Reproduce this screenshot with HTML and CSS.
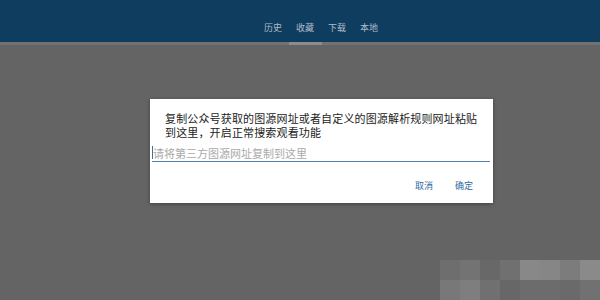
FILE: index.html
```html
<!DOCTYPE html>
<html lang="zh-CN">
<head>
  <meta charset="UTF-8">
  <meta name="viewport" content="width=device-width, initial-scale=1.0">
  <link rel="stylesheet" href="styles.css">
  <title>图源</title>
</head>
<body>
  <div class="header">
    <div class="tabs">
      <div class="tab">历史</div>
      <div class="tab">收藏</div>
      <div class="tab">下载</div>
      <div class="tab">本地</div>
    </div>
  </div>
  <div class="strip">
    <div class="indicator"></div>
  </div>

  <div class="main">
    <div class="dialog">
      <div class="msg">复制公众号获取的图源网址或者自定义的图源解析规则网址粘贴到这里，开启正常搜索观看功能</div>
      <div class="field">
        <span class="caret"></span>
        <span class="hint">请将第三方图源网址复制到这里</span>
      </div>
      <div class="actions">
        <span class="btn">取消</span>
        <span class="btn">确定</span>
      </div>
    </div>
  </div>

  <div class="mosaic">
    <div style="background:#6e6e6e"></div>
    <div style="background:#737373"></div>
    <div style="background:#686868"></div>
    <div style="background:#707070"></div>
    <div style="background:#888888"></div>
    <div style="background:#868686"></div>
    <div style="background:#7c7c7c"></div>
    <div style="background:#8a8a8a"></div>
    <div style="background:#787878"></div>
    <div style="background:#7e7e7e"></div>
    <div style="background:#707070"></div>
    <div style="background:#676767"></div>
    <div style="background:#6c6c6c"></div>
    <div style="background:#6c6c6c"></div>
    <div style="background:#6a6a6a"></div>
    <div style="background:#717171"></div>
  </div>
</body>
</html>
```

FILE: styles.css
```css
body {
  margin: 0;
  width: 600px;
  height: 300px;
  overflow: hidden;
  position: relative;
  background: #646464;
  font-family: "Noto Sans CJK SC", "Noto Sans", sans-serif;
}

.header {
  height: 42px;
  background: #0f3d5f;
}

.tabs {
  display: flex;
  padding-left: 257px;
  padding-top: 20px;
}

.tab {
  width: 32px;
  text-align: center;
  font-size: 9px;
  line-height: 16px;
  color: #aebbc8;
}

.strip {
  height: 3px;
  background: #727272;
  padding-left: 289px;
}

.indicator {
  width: 33px;
  height: 3px;
  background: #8c8c8c;
}

.main {
  padding-top: 54px;
  padding-left: 150px;
}

.dialog {
  width: 343px;
  height: 104px;
  background: #fff;
  box-shadow: 0 1px 4px rgba(0, 0, 0, 0.35);
  box-sizing: border-box;
  padding: 12px 3px 0 2px;
}

.msg {
  padding-left: 13px;
  padding-right: 10px;
  font-size: 11px;
  letter-spacing: 0.15px;
  line-height: 14px;
  color: #222;
}

.field {
  display: flex;
  align-items: center;
  margin-top: 5px;
  height: 17px;
  border-bottom: 1px solid #4f7ea6;
}

.caret {
  width: 1px;
  height: 13px;
  background: #3d73a3;
}

.hint {
  font-size: 11px;
  color: #a9a9a9;
}

.actions {
  display: flex;
  justify-content: flex-end;
  gap: 22px;
  padding-top: 17px;
  padding-right: 17px;
}

.btn {
  font-size: 9px;
  color: #2f6aa0;
}

.mosaic {
  position: absolute;
  left: 440px;
  top: 260px;
  display: grid;
  grid-template-columns: repeat(8, 20px);
  grid-auto-rows: 20px;
}
```
